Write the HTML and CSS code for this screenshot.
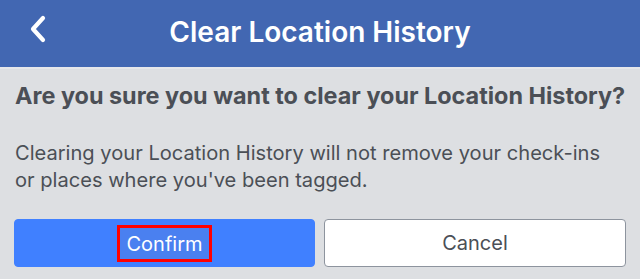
FILE: index.html
```html
<!DOCTYPE html>
<html>
<head>
<meta charset="utf-8">
<link rel="stylesheet" href="styles.css">
</head>
<body>
<header class="topbar">
  <button class="back" aria-label="Back">
    <svg width="18" height="28" viewBox="0 0 18 28"><path d="M14 3 L4 14 L14 25" fill="none" stroke="#fff" stroke-width="4.2" stroke-linecap="round" stroke-linejoin="round"/></svg>
  </button>
  <h1 class="title">Clear Location History</h1>
</header>
<main class="content">
  <h2 class="question">Are you sure you want to clear your Location History?</h2>
  <p class="desc">Clearing your Location History will not remove your check-ins or places where you've been tagged.</p>
  <div class="actions">
    <button class="btn btn-primary"><span class="highlight">Confirm</span></button>
    <button class="btn btn-secondary">Cancel</button>
  </div>
</main>
</body>
</html>
```
FILE: styles.css
```css
* { box-sizing: border-box; }
html, body { margin: 0; padding: 0; }
body {
  width: 640px;
  height: 279px;
  overflow: hidden;
  background: #dddfe2;
  font-family: Inter, "Liberation Sans", sans-serif;
}
.topbar {
  position: relative;
  height: 69px;
  background: #4267b2;
  border-bottom: 2px solid #e6e7ea;
  display: flex;
  align-items: center;
  justify-content: center;
}
.back {
  position: absolute;
  left: 29px;
  top: 15px;
  background: none;
  border: 0;
  padding: 0;
  width: 18px;
  height: 28px;
}
.back svg { display: block; }
.title {
  margin: 0 0 4px;
  color: #fff;
  font-size: 28px;
  font-weight: 600;
  letter-spacing: 0;
}
.content {
  padding: 0 14px;
}
.question {
  margin: 12px 0 0 1px;
  font-size: 23.4px;
  font-weight: 700;
  color: #4b4f56;
  line-height: 30px;
  white-space: nowrap;
}
.desc {
  margin: 29px 0 0 1px;
  max-width: 596px;
  font-size: 20.1px;
  line-height: 27px;
  color: #4b4f56;
}
.actions {
  margin-top: 25px;
  display: flex;
  gap: 9px;
}
.btn {
  flex: 0 0 301px;
  height: 48px;
  border-radius: 4px;
  font-family: Inter, "Liberation Sans", sans-serif;
  font-size: 20px;
  display: flex;
  align-items: center;
  justify-content: center;
  padding: 0;
}
.btn-primary {
  background: #4080ff;
  border: 1px solid #4080ff;
  color: #fff;
}
.btn-secondary {
  flex-basis: 302px;
  background: #fff;
  border: 1px solid #8d949e;
  color: #4b4f56;
}
.highlight {
  border: 3px solid #ff0000;
  padding: 2px 6px 1px;
  background: #4a80f0;
  line-height: 28px;
}
```
